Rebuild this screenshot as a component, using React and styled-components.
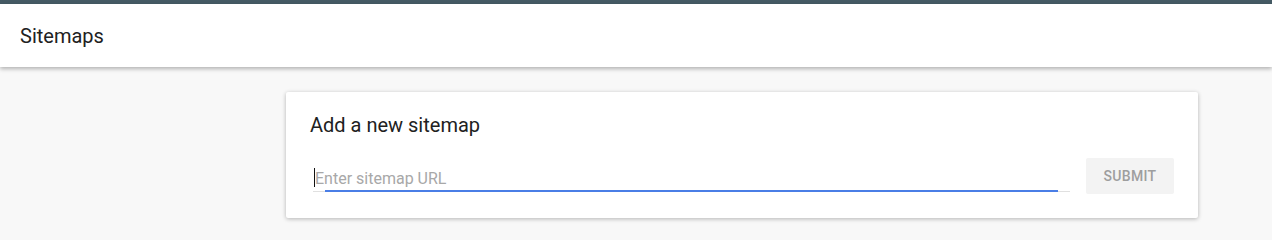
import styled, { createGlobalStyle } from 'styled-components';

const GlobalStyle = createGlobalStyle`
  html, body {
    margin: 0;
    padding: 0;
    background: #f8f8f8;
    font-family: Roboto, "Liberation Sans", sans-serif;
  }
`;

const Page = styled.div`
  min-height: 237px;
  background: #f8f8f8;
`;

const TopStrip = styled.div`
  height: 4px;
  background: #455a64;
`;

const Header = styled.header`
  height: 63px;
  display: flex;
  align-items: center;
  padding-left: 20px;
  background: #fff;
  box-shadow: 0 2px 4px rgba(0, 0, 0, 0.28);
  position: relative;
  z-index: 1;
`;

const PageTitle = styled.h1`
  margin: 0;
  font-size: 20px;
  font-weight: 400;
  color: #212121;
`;

const Main = styled.main`
  padding: 25px 74px 0 286px;
`;

const Card = styled.section`
  background: #fff;
  border-radius: 2px;
  box-shadow: 0 1px 4px rgba(0, 0, 0, 0.28);
  padding: 19px 24px 24px 24px;
`;

const CardTitle = styled.h2`
  margin: 0;
  font-size: 20px;
  line-height: 28px;
  font-weight: 400;
  color: #212121;
`;

const Row = styled.form`
  display: flex;
  align-items: flex-end;
  gap: 16px;
  margin-top: 19px;
`;

const Field = styled.div`
  flex: 1;
  position: relative;
  margin-left: 3px;
  margin-bottom: 2px;
`;

const Input = styled.input`
  display: block;
  width: 100%;
  box-sizing: border-box;
  height: 26px;
  border: none;
  border-bottom: 1px solid #e0e0e0;
  outline: none;
  padding: 0 0 0 2px;
  font-family: inherit;
  font-size: 16px;
  color: #212121;
  background: transparent;

  &::placeholder {
    color: #a8a8a8;
  }
`;

const FocusBar = styled.span`
  position: absolute;
  left: ${p => p.$inset}px;
  right: ${p => p.$inset}px;
  bottom: 0;
  height: 2px;
  background: #4a7ee6;
`;

const Caret = styled.span`
  position: absolute;
  left: 1px;
  top: 2px;
  width: 1px;
  height: 19px;
  background: #111;
`;

const SubmitButton = styled.button`
  width: 88px;
  height: 36px;
  border: none;
  border-radius: 2px;
  background: #f3f3f3;
  color: #9e9e9e;
  font-family: inherit;
  font-size: 14px;
  font-weight: 500;
  letter-spacing: 0.3px;
  cursor: default;
`;

export default function App() {
  return (
    <>
      <GlobalStyle />
      <Page>
        <TopStrip />
        <Header>
          <PageTitle>Sitemaps</PageTitle>
        </Header>
        <Main>
          <Card>
            <CardTitle>Add a new sitemap</CardTitle>
            <Row onSubmit={e => e.preventDefault()}>
              <Field>
                <Input type="text" placeholder="Enter sitemap URL" />
                <FocusBar $inset={12} />
                <Caret />
              </Field>
              <SubmitButton type="submit" disabled>SUBMIT</SubmitButton>
            </Row>
          </Card>
        </Main>
      </Page>
    </>
  );
}
